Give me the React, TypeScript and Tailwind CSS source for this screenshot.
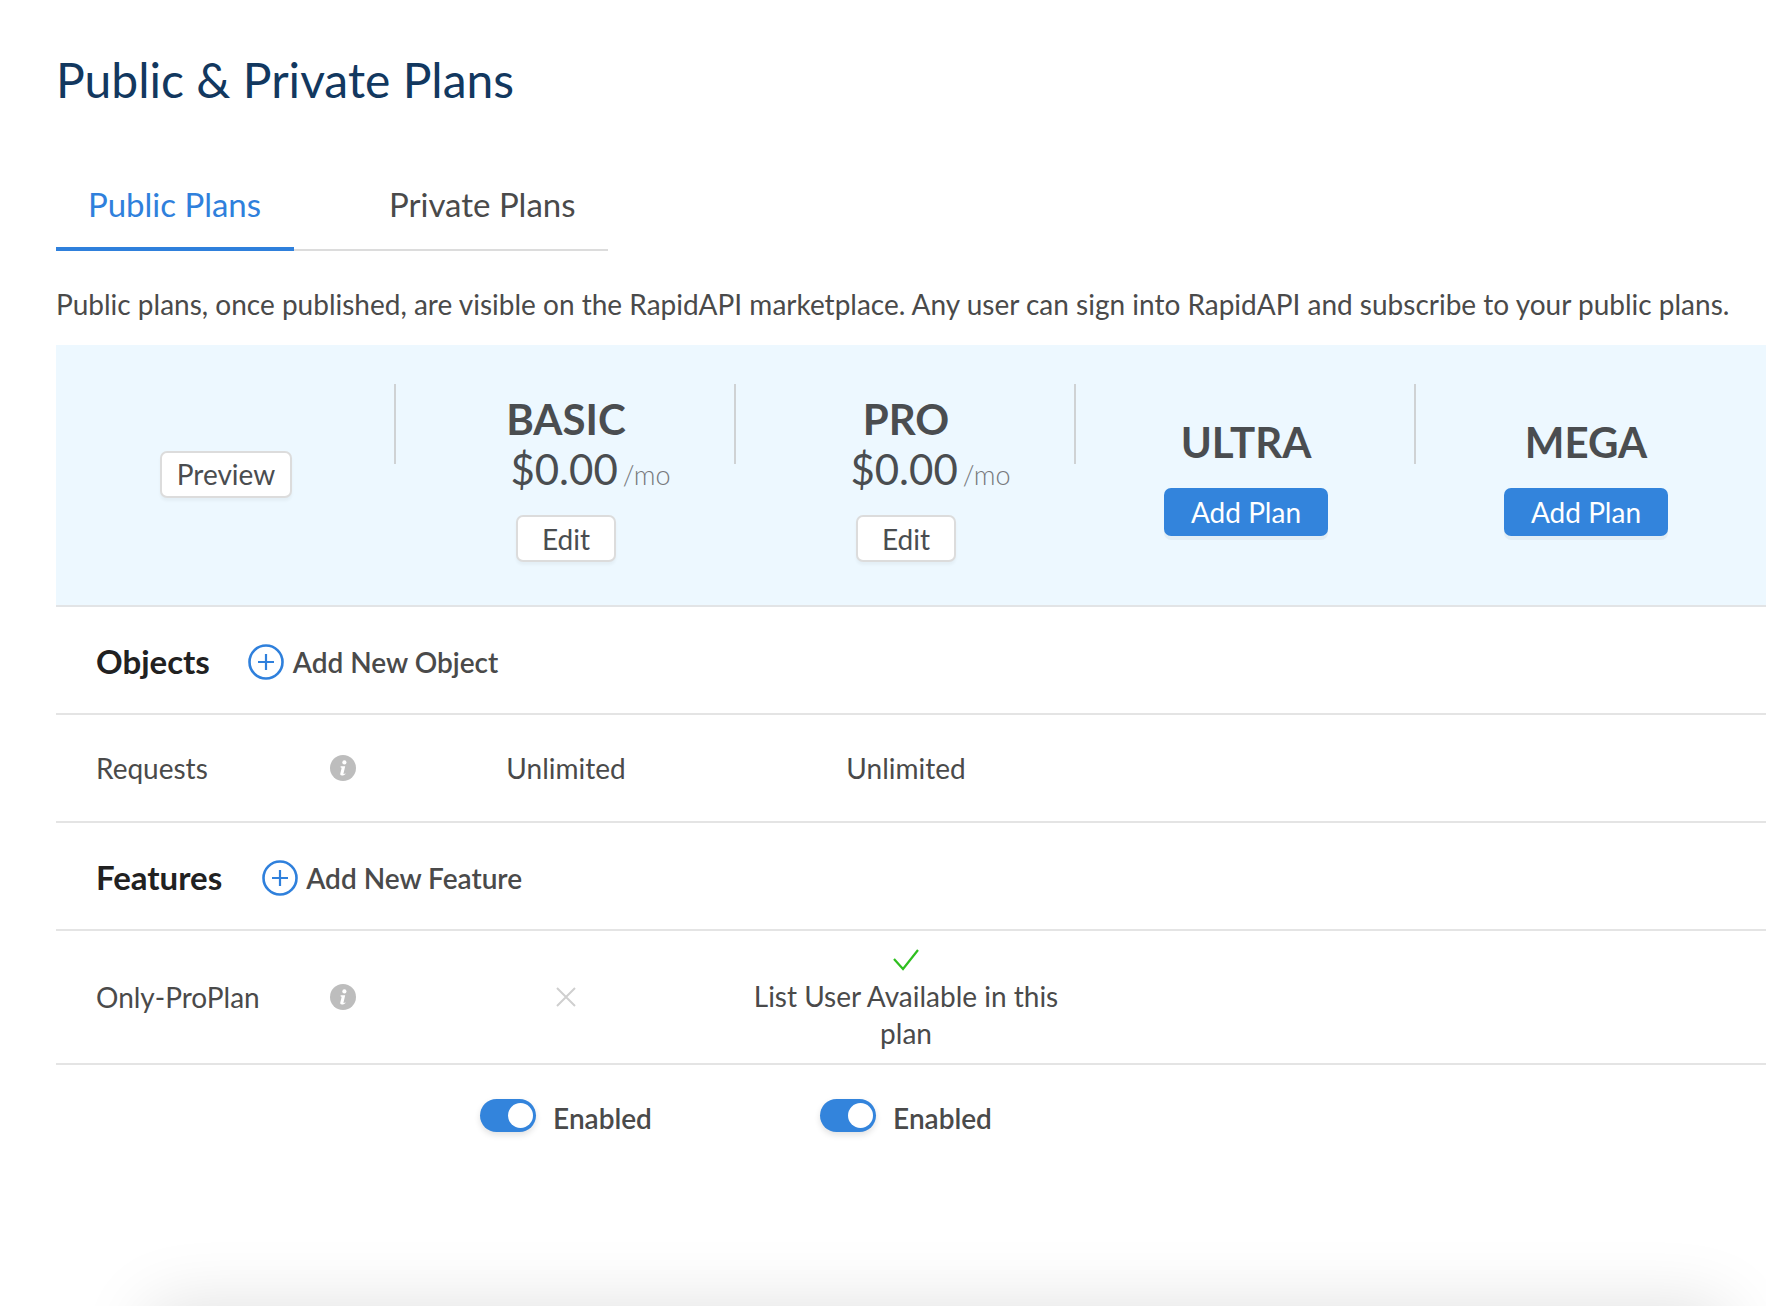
const font = "font-['Lato','Noto_Sans',sans-serif]";

function PlusCircle() {
  return (
    <svg width="36" height="36" viewBox="0 0 36 36" fill="none" stroke="#2f80dc" className="shrink-0">
      <circle cx="18" cy="18" r="16.5" strokeWidth="2.6" />
      <path d="M18 10v16M10 18h16" strokeWidth="2.2" />
    </svg>
  );
}

function InfoIcon() {
  return (
    <svg width="26" height="26" viewBox="0 0 26 26" className="justify-self-start">
      <circle cx="13" cy="13" r="13" fill="#bdbdbd" />
      <circle cx="14.4" cy="7.4" r="2.1" fill="#fff" />
      <path
        d="M10.6 11.2h4.6l-1.7 7.3c-.1.5.3.6.7.4l1-.6.3.6c-1.2 1-2.4 1.6-3.6 1.6-1.3 0-1.9-.8-1.6-2l1.2-5.1c.1-.5-.1-.8-.9-.9z"
        fill="#fff"
      />
    </svg>
  );
}

function WhiteButton({ label, width }: { label: string; width: string }) {
  return (
    <button
      className={`${width} h-[47px] rounded-[7px] border-2 border-[#dcdcdc] bg-white text-[28px] text-[#4a4d50] shadow-[0_3px_3px_rgba(0,0,0,0.04)]`}
    >
      {label}
    </button>
  );
}

function PricedPlan({ name }: { name: string }) {
  return (
    <div className="flex flex-col items-center pt-[47px]">
      <div className="text-[42px] leading-[54px] font-bold text-[#4a4d50]">{name}</div>
      <div className="ml-[49px] flex items-baseline leading-[46px]">
        <span className="text-[42px] text-[#4a4d50]">$0.00</span>
        <span className="ml-[5px] text-[27px] font-light text-[#77797c]">/mo</span>
      </div>
      <div className="mt-[17px]">
        <WhiteButton label="Edit" width="w-[100px]" />
      </div>
    </div>
  );
}

function EmptyPlan({ name }: { name: string }) {
  return (
    <div className="flex flex-col items-center pt-[69px]">
      <div className="text-[42px] leading-[56px] font-bold text-[#4a4d50]">{name}</div>
      <button className="mt-[18px] h-[48px] w-[164px] rounded-[7px] bg-[#3384dc] text-[28px] text-white shadow-[0_4px_0_rgba(0,0,0,0.04)]">
        Add Plan
      </button>
    </div>
  );
}

function Divider() {
  return <div className="absolute top-[39px] right-0 h-[80px] w-[2px] bg-[#cfd2d4]" />;
}

function Toggle() {
  return (
    <div className="flex items-center justify-center gap-[17px]">
      <div className="flex h-[33px] w-[56px] items-center justify-end rounded-full bg-[#3384dc] pr-[3px] shadow-[0_3px_6px_rgba(0,0,0,0.12)]">
        <div className="h-[25px] w-[25px] rounded-full bg-white" />
      </div>
      <span className="translate-y-[3px] text-[28px] font-semibold text-[#4a4a4a]">Enabled</span>
    </div>
  );
}

const cols = "grid grid-cols-[340px_340px_340px_340px_340px_1fr]";

export default function App() {
  return (
    <div className={`relative h-[1306px] overflow-hidden bg-white pl-[56px] ${font}`}>
      <h1 className="pt-[45px] text-[48px] leading-[70px] text-[#12385f]">Public &amp; Private Plans</h1>

      <div className="mt-[66px] flex w-[552px] border-b-2 border-[#dcdcdc] text-[33px] leading-[46px]">
        <div className="-mb-[2px] w-[238px] border-b-4 border-[#2f80dc] pb-[20px] pl-[32px] text-[#2f80dc]">
          Public Plans
        </div>
        <div className="pl-[95px] text-[#4a4a4a]">Private Plans</div>
      </div>

      <p className="mt-[34px] text-[28px] leading-[38px] whitespace-nowrap text-[#4a4a4a]">
        Public plans, once published, are visible on the RapidAPI marketplace. Any user can sign into RapidAPI and
        subscribe to your public plans.
      </p>

      <div className={`${cols} mt-[22px] h-[262px] border-b-2 border-[#e2e4e6] bg-[#edf8ff]`}>
        <div className="relative flex items-center justify-center">
          <div className="-mt-[2px]">
            <WhiteButton label="Preview" width="w-[132px]" />
          </div>
          <Divider />
        </div>
        <div className="relative">
          <PricedPlan name="BASIC" />
          <Divider />
        </div>
        <div className="relative">
          <PricedPlan name="PRO" />
          <Divider />
        </div>
        <div className="relative">
          <EmptyPlan name="ULTRA" />
          <Divider />
        </div>
        <EmptyPlan name="MEGA" />
      </div>

      <div className="flex h-[108px] items-center border-b-2 border-[#e4e4e4] pt-[3px] pl-[40px]">
        <span className="text-[33px] font-bold text-[#212121]">Objects</span>
        <span className="ml-[38px]">
          <PlusCircle />
        </span>
        <span className="ml-[9px] text-[28px] font-semibold text-[#4a4a4a]">Add New Object</span>
      </div>

      <div className={`${cols} h-[108px] items-center border-b-2 border-[#e4e4e4] text-[28px] text-[#4a4a4a]`}>
        <div className="grid grid-cols-[234px_1fr] items-center pl-[40px]">
          <span>Requests</span>
          <InfoIcon />
        </div>
        <div className="text-center">Unlimited</div>
        <div className="text-center">Unlimited</div>
      </div>

      <div className="flex h-[108px] items-center border-b-2 border-[#e4e4e4] pt-[3px] pl-[40px]">
        <span className="text-[33px] font-bold text-[#212121]">Features</span>
        <span className="ml-[40px]">
          <PlusCircle />
        </span>
        <span className="ml-[8px] text-[28px] font-semibold text-[#4a4a4a]">Add New Feature</span>
      </div>

      <div className={`${cols} h-[134px] items-center border-b-2 border-[#e4e4e4] text-[28px] text-[#4a4a4a]`}>
        <div className="grid grid-cols-[234px_1fr] items-center pl-[40px]">
          <span>Only-ProPlan</span>
          <InfoIcon />
        </div>
        <div className="flex justify-center">
          <svg width="20" height="20" viewBox="0 0 20 20" fill="none" stroke="#cfcfcf" strokeWidth="2">
            <path d="M1 1l18 18M19 1L1 19" />
          </svg>
        </div>
        <div className="flex flex-col items-center px-[15px] pt-[6px] text-center leading-[37px]">
          <svg width="28" height="24" viewBox="0 0 28 24" fill="none" stroke="#2fbf1f" strokeWidth="2.2">
            <path d="M2 11l9 10L26 2" />
          </svg>
          <span className="mt-[6px]">List User Available in this plan</span>
        </div>
      </div>

      <div className={`${cols} pt-[29px]`}>
        <div />
        <Toggle />
        <Toggle />
      </div>

      <div className="absolute top-[1318px] right-[50px] left-[160px] h-[100px] rounded-[8px] shadow-[0_0_70px_12px_rgba(0,0,0,0.13)]" />
    </div>
  );
}
